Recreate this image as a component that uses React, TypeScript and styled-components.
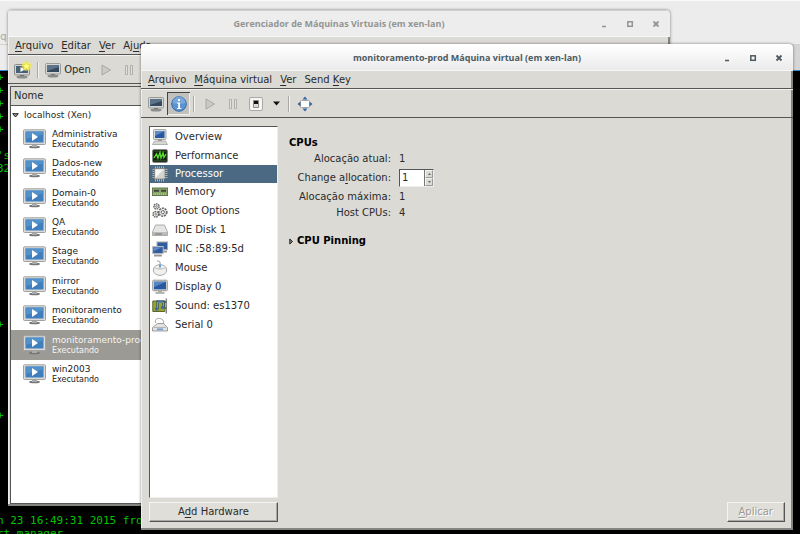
import React from "react";
import styled, { createGlobalStyle, css } from "styled-components";

const GlobalStyle = createGlobalStyle`
  * { box-sizing: border-box; }
  body { margin: 0; overflow: hidden; background: #000; }
  button, input { font: inherit; color: inherit; }
  u { text-underline-offset: 2px; text-decoration-thickness: 1px; }
`;

const Desktop = styled.div`
  position: relative;
  min-height: 100vh;
  display: flex;
  flex-direction: column;
  overflow: hidden;
  font: 10px/14px "DejaVu Sans", Verdana, sans-serif;
  color: #2a2a2a;
`;

const BrowserBack = styled.div`
  height: 71px;
  display: flex;
  flex-direction: column;
  background: linear-gradient(90deg, #ececec 50%, #d5d5d5 50%);
  border-top: 1px solid #fafafa;
  border-bottom: 1px solid #3a86d0;
`;

const BrowserBar = styled.div`
  height: 44px;
  padding-top: 29px;
  background: #ececec;
  border-bottom: 1px solid #d2d2d2;
  color: #a8a8a8;
  text-indent: -5px;
`;

const Terminal = styled.div`
  flex: 1;
  display: flex;
  flex-direction: column;
  background: #000;
  color: #00c400;
  font: 11px/13px "DejaVu Sans Mono", monospace;
  text-indent: -3px;
  white-space: pre;
`;

const Prompt = styled.div`
  height: 13px;
`;

const LastLogin = styled.div`
  margin-top: auto;
`;

const ClippedLine = styled.div`
  height: 7px;
`;

const Frame = styled.section`
  position: absolute;
  display: flex;
  flex-direction: column;
  overflow: hidden;
  background: #dbdad5;
  border-radius: 4px 4px 0 0;
  box-shadow: inset -2px -2px 0 #858480, inset 1px 0 0 #efeeec, 0 0 3px rgba(0, 0, 0, 0.5);
`;

const ManagerFrame = styled(Frame)`
  inset: 10px 130px 28px 8px;
`;

const DetailsFrame = styled(Frame)`
  inset: 44px 7px 4px 141px;
`;

const TitleBar = styled.header<{ $active?: boolean }>`
  display: grid;
  grid-template-columns: 1fr auto 1fr;
  align-items: center;
  flex: none;
  height: 27px;
  background: ${(p) => (p.$active ? "linear-gradient(#ffffff, #ebebeb)" : "#ededed")};
  border-top: 1px solid ${(p) => (p.$active ? "#fff" : "#d0d0d0")};
  border-bottom: 1px solid #f7f7f7;
  color: ${(p) => (p.$active ? "#4d5a60" : "#929593")};
`;

const Title = styled.h1`
  grid-column: 2;
  margin: 0;
  font: bold 9px/14px "Open Sans", "Noto Sans", sans-serif;
`;

const WindowButtons = styled.div`
  display: flex;
  justify-content: flex-end;
  gap: 14px;
  padding-right: 8px;
`;

const WindowButton = styled.button`
  display: flex;
  padding: 0;
  border: 0;
  background: none;
`;

const MenuBar = styled.nav`
  display: flex;
  flex: none;
  align-items: center;
  gap: 8px;
  height: 18px;
  padding-left: 7px;
  border-bottom: 1px solid #555;
`;

const MenuButton = styled.button`
  padding: 0;
  border: 0;
  background: none;
  white-space: nowrap;
`;

const Toolbar = styled.div`
  display: flex;
  flex: none;
  align-items: center;
  height: 29px;
  padding-left: 3px;
  border-top: 1px solid #f2f2ef;
  border-bottom: 1px solid #555;
`;

const toolWidths = { narrow: "18px", normal: "23px", wide: "52px" };

const ToolButton = styled.button<{ $pressed?: boolean; $size?: keyof typeof toolWidths }>`
  display: flex;
  align-items: center;
  justify-content: center;
  flex: none;
  gap: 3px;
  width: ${(p) => toolWidths[p.$size ?? "normal"]};
  height: 23px;
  padding: 0;
  border: 0;
  background: none;
  ${(p) =>
    p.$pressed &&
    css`
      background: #c3c1bd;
      box-shadow: inset 1px 1px 0 #444, inset -1px -1px 0 #eee;
    `}
`;

const Divider = styled.span`
  width: 2px;
  height: 16px;
  margin: 0 3px;
  border-left: 1px solid #aaa9a5;
  border-right: 1px solid #f4f4f2;
`;

const TreePane = styled.div`
  display: flex;
  flex: 1;
  flex-direction: column;
  margin: 2px 4px 2px 2px;
  background: #fff;
  border: 1px solid #555;
`;

const TreeHeader = styled.div`
  flex: none;
  height: 19px;
  padding: 2px 3px;
  background: #dbdad5;
  border-bottom: 1px solid #555;
`;

const TreeRoot = styled.div`
  display: flex;
  align-items: center;
  gap: 5px;
  height: 18px;
  padding-left: 1px;
  font-size: 9px;
`;

const MachineList = styled.ul`
  display: grid;
  grid-auto-rows: 1fr;
  flex: none;
  height: 265px;
  margin: 0;
  padding: 0;
  list-style: none;
`;

const Machine = styled.li<{ $selected?: boolean }>`
  display: flex;
  align-items: center;
  gap: 6px;
  padding-left: 12px;
  background: ${(p) => (p.$selected ? "#9c9a94" : "transparent")};
  color: ${(p) => (p.$selected ? "#f4f4f2" : "#222")};
`;

const MachineName = styled.div`
  font-size: 9px;
  line-height: 11px;
`;

const MachineState = styled.div`
  font-size: 8px;
  line-height: 9px;
`;

const Body = styled.main`
  display: flex;
  flex: 1;
  min-height: 0;
  padding: 8px 8px 8px;
`;

const Sidebar = styled.aside`
  display: flex;
  flex: none;
  flex-direction: column;
  gap: 4px;
  width: 129px;
`;

const HardwareList = styled.ul`
  flex: 1;
  min-height: 0;
  margin: 0;
  padding: 0;
  background: #fff;
  border: 1px solid;
  border-color: #555 #eeeeec #eeeeec #555;
  list-style: none;
`;

const HardwareItem = styled.li<{ $selected?: boolean; $compact?: boolean }>`
  display: flex;
  align-items: center;
  gap: 7px;
  height: ${(p) => (p.$compact ? "18px" : "19px")};
  padding-left: 2px;
  background: ${(p) => (p.$selected ? "#4b6983" : "transparent")};
  color: ${(p) => (p.$selected ? "#fff" : "#2a2a2a")};
`;

const PushButton = styled.button`
  flex: none;
  height: 20px;
  padding: 0 11px;
  background: #dfded9;
  border: 1px solid;
  border-color: #f4f4f2 #555 #555 #f4f4f2;
  box-shadow: inset -1px -1px 0 #aaa9a4;
  line-height: 16px;
  &:disabled {
    color: #9b9994;
    text-shadow: 1px 1px 0 #fff;
  }
`;

const Panel = styled.div`
  display: flex;
  flex: 1;
  flex-direction: column;
  padding: 9px 0 0 11px;
`;

const Heading = styled.h2`
  margin: 0;
  font-size: 10px;
  line-height: 16px;
  color: #000;
`;

const Facts = styled.div`
  display: grid;
  grid-template-columns: 102px auto;
  column-gap: 8px;
  align-items: center;
  justify-content: start;
  line-height: 16px;
`;

const FactLabel = styled.label`
  text-align: right;
  white-space: nowrap;
`;

const SpinBox = styled.div`
  display: flex;
  width: 35px;
  height: 18px;
  margin: 2px 0;
  border: 1px solid;
  border-color: #555 #eee #eee #555;
  background: #fff;
`;

const SpinInput = styled.input`
  flex: 1;
  min-width: 0;
  padding: 0 2px;
  border: 0;
  outline: 0;
  background: none;
`;

const SpinButtons = styled.div`
  display: flex;
  flex-direction: column;
  width: 9px;
  border-left: 1px solid #777;
`;

const SpinButton = styled.button`
  display: flex;
  flex: 1;
  align-items: center;
  justify-content: center;
  min-height: 0;
  padding: 0;
  background: #dbdad5;
  border: 1px solid;
  border-color: #f4f4f2 #999 #999 #f4f4f2;
`;

const Expander = styled.button`
  display: flex;
  align-items: center;
  gap: 3px;
  margin-top: 13px;
  padding: 0;
  border: 0;
  background: none;
  color: #000;
  font-weight: bold;
`;

const Footer = styled.footer`
  display: flex;
  justify-content: flex-end;
  margin-top: auto;
`;

const Monitor = () => (
  <svg width="16" height="16" viewBox="0 0 16 16">
    <ellipse cx="8" cy="14" rx="5.500" ry="1.500" fill="#8b8d8b" />
    <rect x="6" y="11" width="4" height="2" fill="#555" />
    <rect x=".5" y="1.500" width="15" height="10.500" rx="1" fill="#d5d6d3" stroke="#9a9c9a" />
    <path d="M2 3h12v7H2z" fill="#34495c" />
    <path d="M2 3h12v2L2 9z" fill="#5d738a" />
  </svg>
);

const NewMachine = () => (
  <svg width="18" height="18" viewBox="0 0 18 18">
    <ellipse cx="8" cy="16" rx="5.500" ry="1.500" fill="#8b8d8b" />
    <rect x="6" y="13" width="4" height="2" fill="#555" />
    <rect x=".5" y="3.500" width="15" height="10.500" rx="1" fill="#d5d6d3" stroke="#8b8d8b" />
    <path d="M2 5h12v7H2z" fill="#486078" />
    <path d="M6.500 6l4 2.500-4 2.500z" fill="#fff" />
    <circle cx="12.500" cy="5" r="4.800" fill="#f5f06a" opacity=".7" />
    <path d="M12.500 .6l1.300 3 3.200.3-2.400 2.200.7 3.200-2.800-1.700-2.800 1.700.7-3.200L8 3.900l3.200-.3z" fill="#fffc80" stroke="#d9cc20" strokeWidth=".5" />
  </svg>
);

const PlayIcon = () => (
  <svg width="12" height="12" viewBox="0 0 12 12">
    <path d="M2 1L10.500 6 2 11z" fill="#cbcac6" stroke="#a9a8a4" />
  </svg>
);

const PauseIcon = () => (
  <svg width="12" height="12" viewBox="0 0 12 12" fill="#e3e2de" stroke="#b0afab">
    <path d="M2.500 1.500h2v9h-2zM7.500 1.500h2v9h-2z" />
  </svg>
);

const PowerIcon = () => (
  <svg width="14" height="14" viewBox="0 0 14 14">
    <rect x=".5" y=".5" width="13" height="13" rx="1.500" fill="#f5f5f3" stroke="#aaa9a5" />
    <rect x="4" y="3" width="6" height="8" rx="1" fill="#888" />
    <rect x="5" y="4" width="4" height="3" fill="#111" />
    <rect x="5" y="7" width="4" height="3" fill="#ddd" />
  </svg>
);

const InfoIcon = () => (
  <svg width="16" height="16" viewBox="0 0 16 16">
    <circle cx="8" cy="8" r="7.300" fill="#5b92d0" stroke="#326ba8" />
    <path d="M1.500 7a6.500 6.500 0 0 1 13 0q-6 2-13 0z" fill="#8bb5e2" opacity=".6" />
    <rect x="7" y="3" width="2" height="2" fill="#fff" />
    <path d="M6 6.500h3V12h1.300v1H6v-1h1.200V7.500H6z" fill="#fff" />
  </svg>
);

const FullscreenIcon = () => (
  <svg width="16" height="16" viewBox="0 0 16 16">
    <rect x="3.500" y="4.500" width="9" height="7" rx="1" fill="#fff" stroke="#a5a5a2" />
    <path d="M8 .5L10.500 3.500h-5zM8 15.500l2.500-3h-5zM.5 8l3-2.500v5zM15.500 8l-3-2.500v5z" fill="#3465a4" />
  </svg>
);

const DownArrow = () => (
  <svg width="7" height="7" viewBox="0 0 7 7">
    <path d="M0 1.500h7L3.500 5.500z" fill="#111" />
  </svg>
);

const TreeArrow = () => (
  <svg width="7" height="7" viewBox="0 0 7 7">
    <path d="M.7 1.700h5.600L3.500 5z" fill="#999" stroke="#222" />
  </svg>
);

const ExpandArrow = () => (
  <svg width="5" height="7" viewBox="0 0 5 7">
    <path d="M.8 1l2.700 2.500L.8 6z" fill="#888" stroke="#222" />
  </svg>
);

const RunningIcon = () => (
  <svg width="23" height="20" viewBox="0 0 23 20">
    <ellipse cx="11.500" cy="18" rx="5.500" ry="1.300" fill="#777" />
    <path d="M9 15h5v3H9z" fill="#aaa" />
    <rect x=".5" y=".8" width="22" height="14.700" rx="1" fill="#dadbd8" stroke="#a1a29f" />
    <rect x="2.500" y="2.500" width="18" height="11" fill="#3f7fbd" />
    <path d="M2.500 2.500h18v3L2.500 10z" fill="#5291ca" />
    <path d="M9 4l6 4-6 4z" fill="#fff" />
  </svg>
);

const art: Record<string, React.ReactNode> = {
  overview: (
    <>
      <path d="M2.500 12h11l2 3.500H.5z" fill="#d8d8d5" stroke="#999" strokeWidth=".7" />
      <path d="M6 10h4v2H6z" fill="#999" />
      <rect x="1.500" y=".5" width="12.500" height="10" rx="1" fill="#dcdcd9" stroke="#888" strokeWidth=".7" />
      <path d="M3 2h9.500v7H3z" fill="#2859a0" />
      <path d="M3 2h9.500L3 7z" fill="#5d8bc9" />
    </>
  ),
  performance: (
    <>
      <rect x=".7" y="1.700" width="14.600" height="12.600" rx="1" fill="#102010" stroke="#777" />
      <path d="M2 3.500h12M2 12.500h12M5 3v10M11 3v10" stroke="#28551c" strokeWidth=".7" />
      <path d="M2 10l2.500-4L6 10l2-5.500L9 10l2-5 1 4.500L14 6" fill="none" stroke="#5de032" strokeWidth="1.300" />
    </>
  ),
  processor: (
    <>
      <path d="M3.500 .5v15M5.500 .5v15M7.500 .5v15M9.500 .5v15M11.500 .5v15M.5 3.500h15M.5 5.500h15M.5 7.500h15M.5 9.500h15M.5 11.500h15" stroke="#b5b5b2" />
      <rect x="2.500" y="2.500" width="10.500" height="10.500" fill="#d5d5d0" stroke="#777" strokeWidth=".7" />
      <path d="M3.500 3.500h8l-8 8z" fill="#f7f7f4" />
    </>
  ),
  memory: (
    <>
      <rect x=".5" y="4" width="15" height="7.500" fill="#86a566" stroke="#62794f" />
      <path d="M2 6.800h5M9 6.800h5" stroke="#444" strokeWidth="2" />
      <path d="M1 10h14" stroke="#e2da93" strokeDasharray="1 1" />
    </>
  ),
  boot: (
    <g fill="#e3e3e0" stroke="#666">
      <circle cx="4.500" cy="3.500" r="2.600" strokeWidth="1.400" strokeDasharray="1.600 .7" />
      <circle cx="3.800" cy="11.300" r="2.800" strokeWidth="1.400" strokeDasharray="1.600 .7" />
      <circle cx="10.800" cy="9.200" r="4" strokeWidth="1.600" strokeDasharray="2 .9" />
      <circle cx="10.800" cy="9.200" r="1.600" fill="#fff" />
      <circle cx="4.500" cy="3.500" r=".8" fill="#fff" strokeWidth=".7" />
      <circle cx="3.800" cy="11.300" r=".8" fill="#fff" strokeWidth=".7" />
    </g>
  ),
  disk: (
    <>
      <path d="M3.500 3h9l3 7v3.500H.5V10z" fill="#e5e5e3" stroke="#999" strokeWidth=".8" />
      <path d="M1 10h14v3H1z" fill="#bcbcb9" />
      <path d="M3 12h7" stroke="#777" />
    </>
  ),
  network: (
    <>
      <rect x="5" y="1" width="10.500" height="7.500" fill="#2f5da0" stroke="#aaa" />
      <path d="M9 10.500h6" stroke="#999" strokeWidth="2" />
      <rect x=".7" y="5.500" width="10.500" height="7" fill="#2f5da0" stroke="#bbb" />
      <path d="M1.500 6.200h8.500l-8.500 4z" fill="#5f8dcb" />
      <path d="M2 14.500h8" stroke="#999" strokeWidth="2" />
    </>
  ),
  mouse: (
    <>
      <path d="M5 1q4-.5 3 4" fill="none" stroke="#999" />
      <ellipse cx="8" cy="10" rx="6.700" ry="5.400" fill="#f0f0ed" stroke="#aaa" />
      <path d="M2.500 8q5.500 2.500 11 0M8 4.500V9" fill="none" stroke="#aaa" strokeWidth=".7" />
      <rect x="7" y="4.500" width="2" height="3" fill="#6aa3dc" />
    </>
  ),
  display: (
    <>
      <path d="M6 11h4v2h2.500v2h-9v-2H6z" fill="#b5b5b2" />
      <rect x=".7" y="1.200" width="14.600" height="10.600" rx="1" fill="#d4d4d1" stroke="#999" />
      <path d="M2 2.700h12v7.600H2z" fill="#2859a0" />
      <path d="M2 2.700h12L2 8z" fill="#5687c4" />
    </>
  ),
  sound: (
    <>
      <path d="M14.300 .5v15" stroke="#888" strokeWidth="1.500" />
      <path d="M12.500 4h2M12.500 10h2" stroke="#666" strokeWidth="2" />
      <path d="M.8 3h12v10.500H.8z" fill="#9aa52f" stroke="#5c652c" />
      <path d="M5.500 11.500V3.500h6v6" fill="none" stroke="#25466f" strokeWidth="2.200" />
      <path d="M5.500 11V4h6v5" fill="none" stroke="#6aa0dc" />
      <circle cx="4.500" cy="11" r="1.700" fill="#3b6dab" />
      <circle cx="10.500" cy="9.500" r="1.700" fill="#3b6dab" />
    </>
  ),
  serial: (
    <>
      <path d="M3.500 6q-1-5 4-4.500t4 5.500" fill="none" stroke="#aaa" />
      <path d="M.5 10.500L5.500 6.500h6l4 4V14H.5z" fill="#e2e2df" stroke="#888" strokeWidth=".8" />
      <path d="M2 10.500h12" stroke="#aaa" strokeWidth=".8" />
      <path d="M5 12.300h6" stroke="#6f9fd3" strokeWidth="1.800" />
    </>
  ),
};

const Controls = () => (
  <WindowButtons>
    <WindowButton aria-label="Minimizar">
      <svg width="12" height="12"><path d="M4 8.500h4" stroke="currentColor" strokeWidth="1.500" /></svg>
    </WindowButton>
    <WindowButton aria-label="Maximizar">
      <svg width="12" height="12"><rect x="3.800" y="3.800" width="4.500" height="4.500" fill="none" stroke="currentColor" strokeWidth="1.500" /></svg>
    </WindowButton>
    <WindowButton aria-label="Fechar">
      <svg width="12" height="12"><path d="M3.500 3.500l5 5m0-5l-5 5" stroke="currentColor" strokeWidth="1.800" /></svg>
    </WindowButton>
  </WindowButtons>
);

const machines = ["Administrativa", "Dados-new", "Domain-0", "QA", "Stage", "mirror", "monitoramento", "monitoramento-prod", "win2003"];

const hardware = [
  { icon: "overview", label: "Overview" },
  { icon: "performance", label: "Performance" },
  { icon: "processor", label: "Processor", compact: true },
  { icon: "memory", label: "Memory", compact: true },
  { icon: "boot", label: "Boot Options" },
  { icon: "disk", label: "IDE Disk 1" },
  { icon: "network", label: "NIC :58:89:5d" },
  { icon: "mouse", label: "Mouse" },
  { icon: "display", label: "Display 0" },
  { icon: "sound", label: "Sound: es1370" },
  { icon: "serial", label: "Serial 0" },
];

const terminalLines = ["+", "+", "+", "+", "+", "", "'s", "32", "", "", "", "", "", "", "", "", "", "", "", "+", "", "", "", "", "", "", "+"];

export default function App() {
  return (
    <Desktop>
      <GlobalStyle />
      <BrowserBack>
        <BrowserBar>sq</BrowserBar>
      </BrowserBack>
      <Terminal>
        {terminalLines.map((line, i) => <Prompt key={i}>{line}</Prompt>)}
        <LastLogin>n 23 16:49:31 2015 from</LastLogin>
        <ClippedLine>rt manager</ClippedLine>
      </Terminal>

      <ManagerFrame>
        <TitleBar>
          <Title>Gerenciador de Máquinas Virtuais (em xen-lan)</Title>
          <Controls />
        </TitleBar>
        <MenuBar>
          <MenuButton><u>A</u>rquivo</MenuButton>
          <MenuButton><u>E</u>ditar</MenuButton>
          <MenuButton><u>V</u>er</MenuButton>
          <MenuButton>Aj<u>u</u>da</MenuButton>
        </MenuBar>
        <Toolbar>
          <ToolButton aria-label="Nova máquina"><NewMachine /></ToolButton>
          <Divider />
          <ToolButton $size="wide"><Monitor />Open</ToolButton>
          <ToolButton aria-label="Executar" disabled><PlayIcon /></ToolButton>
          <ToolButton aria-label="Pausar" disabled><PauseIcon /></ToolButton>
        </Toolbar>
        <TreePane>
          <TreeHeader>Nome</TreeHeader>
          <TreeRoot><TreeArrow />localhost (Xen)</TreeRoot>
          <MachineList>
            {machines.map((name) => (
              <Machine key={name} $selected={name === "monitoramento-prod"}>
                <RunningIcon />
                <div>
                  <MachineName>{name}</MachineName>
                  <MachineState>Executando</MachineState>
                </div>
              </Machine>
            ))}
          </MachineList>
        </TreePane>
      </ManagerFrame>

      <DetailsFrame>
        <TitleBar $active>
          <Title>monitoramento-prod Máquina virtual (em xen-lan)</Title>
          <Controls />
        </TitleBar>
        <MenuBar>
          <MenuButton><u>A</u>rquivo</MenuButton>
          <MenuButton><u>M</u>áquina virtual</MenuButton>
          <MenuButton><u>V</u>er</MenuButton>
          <MenuButton>Send <u>K</u>ey</MenuButton>
        </MenuBar>
        <Toolbar>
          <ToolButton aria-label="Console"><Monitor /></ToolButton>
          <ToolButton aria-label="Detalhes" $pressed><InfoIcon /></ToolButton>
          <Divider />
          <ToolButton aria-label="Executar" disabled><PlayIcon /></ToolButton>
          <ToolButton aria-label="Pausar" disabled><PauseIcon /></ToolButton>
          <ToolButton aria-label="Desligar"><PowerIcon /></ToolButton>
          <ToolButton aria-label="Opções" $size="narrow"><DownArrow /></ToolButton>
          <Divider />
          <ToolButton aria-label="Tela cheia"><FullscreenIcon /></ToolButton>
        </Toolbar>
        <Body>
          <Sidebar>
            <HardwareList>
              {hardware.map((item) => (
                <HardwareItem key={item.icon} $selected={item.icon === "processor"} $compact={item.compact}>
                  <svg width="16" height="16" viewBox="0 0 16 16">{art[item.icon]}</svg>
                  {item.label}
                </HardwareItem>
              ))}
            </HardwareList>
            <PushButton>A<u>d</u>d Hardware</PushButton>
          </Sidebar>
          <Panel>
            <Heading>CPUs</Heading>
            <Facts>
              <FactLabel as="span">Alocação atual:</FactLabel>
              <span>1</span>
              <FactLabel htmlFor="allocation">Change a<u>l</u>location:</FactLabel>
              <SpinBox>
                <SpinInput id="allocation" defaultValue="1" />
                <SpinButtons>
                  <SpinButton aria-label="Aumentar"><svg width="3" height="2"><path d="M0 2h3L1.500 0z" fill="#666" /></svg></SpinButton>
                  <SpinButton aria-label="Diminuir"><svg width="3" height="2"><path d="M0 0h3L1.500 2z" fill="#666" /></svg></SpinButton>
                </SpinButtons>
              </SpinBox>
              <FactLabel as="span">Alocação máxima:</FactLabel>
              <span>1</span>
              <FactLabel as="span">Host CPUs:</FactLabel>
              <span>4</span>
            </Facts>
            <Expander><ExpandArrow />CPU Pinning</Expander>
            <Footer>
              <PushButton disabled><u>A</u>plicar</PushButton>
            </Footer>
          </Panel>
        </Body>
      </DetailsFrame>
    </Desktop>
  );
}
